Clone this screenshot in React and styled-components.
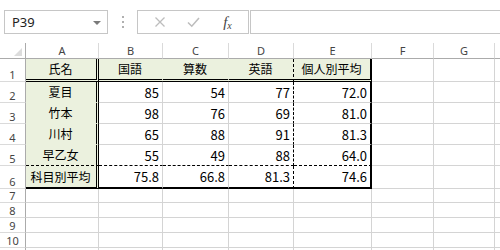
import React from 'react';
import styled, { createGlobalStyle } from 'styled-components';

const GRID = '#d4d4d4';
const HEAD_LINE = '#ababab';
const HEAD_SEP = '#dadada';
const FILL = '#ebf1de';

const GlobalStyle = createGlobalStyle`
  html, body {
    margin: 0;
    padding: 0;
    background: #fff;
    overflow: hidden;
  }
  body {
    width: 500px;
    height: 250px;
    font-family: "Noto Sans", "Noto Sans CJK JP", sans-serif;
  }
`;

const data = [
  ['氏名', '国語', '算数', '英語', '個人別平均'],
  ['夏目', '85', '54', '77', '72.0'],
  ['竹本', '98', '76', '69', '81.0'],
  ['川村', '65', '88', '91', '81.3'],
  ['早乙女', '55', '49', '88', '64.0'],
  ['科目別平均', '75.8', '66.8', '81.3', '74.6'],
];

const letters = ['A', 'B', 'C', 'D', 'E', 'F', 'G', ''];
const rowCount = 10;

const App = () => {
  const rightBorder = (c, filled) => {
    if (c === 0) return '3px double #000';
    if (c === 3) return '1px dashed #000';
    if (c === 4) return '2px solid #000';
    return `1px solid ${filled ? FILL : GRID}`;
  };
  const bottomBorder = (r, filled) => {
    if (r === 0) return '3px double #000';
    if (r === 4) return '1px dashed #000';
    if (r === 5) return '2px solid #000';
    return `1px solid ${filled ? FILL : GRID}`;
  };

  const cells = [];
  for (let r = 0; r < rowCount; r++) {
    cells.push(
      <RowHead key={`rh${r}`}>
        <span>{r + 1}</span>
      </RowHead>
    );
    for (let c = 0; c < 8; c++) {
      const inTable = r < 6 && c < 5;
      if (inTable) {
        const filled = r === 0 || c === 0;
        const text = data[r][c];
        const isText = r === 0 || c === 0;
        cells.push(
          <Cell
            key={`${r}-${c}`}
            $fill={filled}
            $align={isText ? 'center' : 'flex-end'}
            $right={rightBorder(c, filled)}
            $bottom={bottomBorder(r, filled)}
            $cjk={isText}
          >
            {text}
          </Cell>
        );
      } else {
        cells.push(
          <Cell
            key={`${r}-${c}`}
            $right={`1px solid ${GRID}`}
            $bottom={`1px solid ${GRID}`}
          />
        );
      }
    }
  }

  return (
    <>
      <GlobalStyle />
      <Toolbar>
        <NameBox>
          <span>P39</span>
          <DropArrow />
        </NameBox>
        <Grip>
          <i />
          <i />
          <i />
        </Grip>
        <ButtonBox>
          <IconBtn>
            <svg width="12" height="12" viewBox="0 0 12 12">
              <path d="M1.5 1.5 L10.5 10.5 M10.5 1.5 L1.5 10.5" stroke="#bdbdbd" strokeWidth="1.3" fill="none" />
            </svg>
          </IconBtn>
          <IconBtn>
            <svg width="13" height="12" viewBox="0 0 13 12">
              <path d="M1 6.5 L4.8 10.2 L12 2" stroke="#bdbdbd" strokeWidth="1.6" fill="none" />
            </svg>
          </IconBtn>
          <Fx>
            f<sub>x</sub>
          </Fx>
        </ButtonBox>
        <FormulaBox />
      </Toolbar>
      <Sheet>
        <Corner>
          <svg width="8" height="8" viewBox="0 0 8 8">
            <path d="M8 0 L8 8 L0 8 Z" fill="#dcdcdc" />
          </svg>
        </Corner>
        {letters.map((l, i) => (
          <ColHead key={l + i}>{l}</ColHead>
        ))}
        {cells}
        <RowHead />
        {letters.map((l, i) => (
          <Cell key={`last${i}`} $right={`1px solid ${GRID}`} $bottom={`1px solid ${GRID}`} />
        ))}
      </Sheet>
    </>
  );
};

const Toolbar = styled.div`
  display: flex;
  align-items: flex-start;
  height: 43px;
  box-sizing: border-box;
  padding: 10px 0 0 4px;
`;

const NameBox = styled.div`
  width: 104px;
  height: 24px;
  box-sizing: border-box;
  border: 1px solid #c6c6c6;
  display: flex;
  align-items: center;
  justify-content: space-between;
  padding: 0 6px 0 7px;
  font-family: "Noto Sans", sans-serif;
  font-size: 13px;
  color: #222;
`;

const DropArrow = styled.div`
  width: 0;
  height: 0;
  border-left: 4px solid transparent;
  border-right: 4px solid transparent;
  border-top: 4px solid #7a7a7a;
  margin-top: 1px;
`;

const Grip = styled.div`
  width: 29px;
  height: 24px;
  display: flex;
  flex-direction: column;
  align-items: center;
  justify-content: center;
  gap: 3px;
  i {
    display: block;
    width: 2px;
    height: 2px;
    background: #b0b0b0;
  }
`;

const ButtonBox = styled.div`
  width: 112px;
  height: 24px;
  box-sizing: border-box;
  border: 1px solid #c6c6c6;
  display: flex;
  align-items: center;
  padding-left: 9px;
  gap: 9px;
`;

const IconBtn = styled.div`
  width: 25px;
  display: flex;
  justify-content: center;
  align-items: center;
`;

const Fx = styled.div`
  width: 25px;
  text-align: center;
  font-family: "Liberation Serif", serif;
  font-style: italic;
  font-size: 15px;
  color: #444;
  line-height: 1;
  sub {
    font-size: 10px;
    vertical-align: 0;
    position: relative;
    top: 2px;
  }
`;

const FormulaBox = styled.div`
  flex: 1;
  height: 24px;
  margin-left: 1px;
  margin-right: -3px;
  box-sizing: border-box;
  border: 1px solid #c6c6c6;
`;

const Sheet = styled.div`
  display: grid;
  grid-template-columns: 26px 73px 64px 66px 65px 78px 62px 61px 1fr;
  grid-template-rows: 16px 23px 21px 21px 21px 21px 23px 14px 15px 15px 15px 15px;
`;

const Corner = styled.div`
  box-sizing: border-box;
  border-right: 1px solid ${HEAD_LINE};
  border-bottom: 1px solid ${HEAD_LINE};
  display: flex;
  align-items: flex-end;
  justify-content: flex-end;
  padding: 0 3px 2px 0;
`;

const ColHead = styled.div`
  box-sizing: border-box;
  border-right: 1px solid ${HEAD_SEP};
  border-bottom: 1px solid ${HEAD_LINE};
  display: flex;
  align-items: center;
  justify-content: center;
  font-family: "Noto Sans", sans-serif;
  font-size: 11px;
  color: #444;
  line-height: 1;
`;

const RowHead = styled.div`
  box-sizing: border-box;
  border-right: 1px solid ${HEAD_LINE};
  border-bottom: 1px solid ${HEAD_SEP};
  display: flex;
  align-items: flex-end;
  justify-content: center;
  padding-bottom: 1px;
  font-family: "Noto Sans", sans-serif;
  font-size: 11px;
  color: #444;
  line-height: 1;
`;

const Cell = styled.div`
  box-sizing: border-box;
  background: ${(p) => (p.$fill ? FILL : '#fff')};
  border-right: ${(p) => p.$right};
  border-bottom: ${(p) => p.$bottom};
  display: flex;
  align-items: center;
  justify-content: ${(p) => p.$align || 'flex-start'};
  padding: 0 3px 0 2px;
  font-family: "Noto Sans CJK JP", sans-serif;
  font-size: ${(p) => (p.$cjk ? '12px' : '13px')};
  color: #000;
  line-height: 1;
  white-space: nowrap;
`;

export default App;
